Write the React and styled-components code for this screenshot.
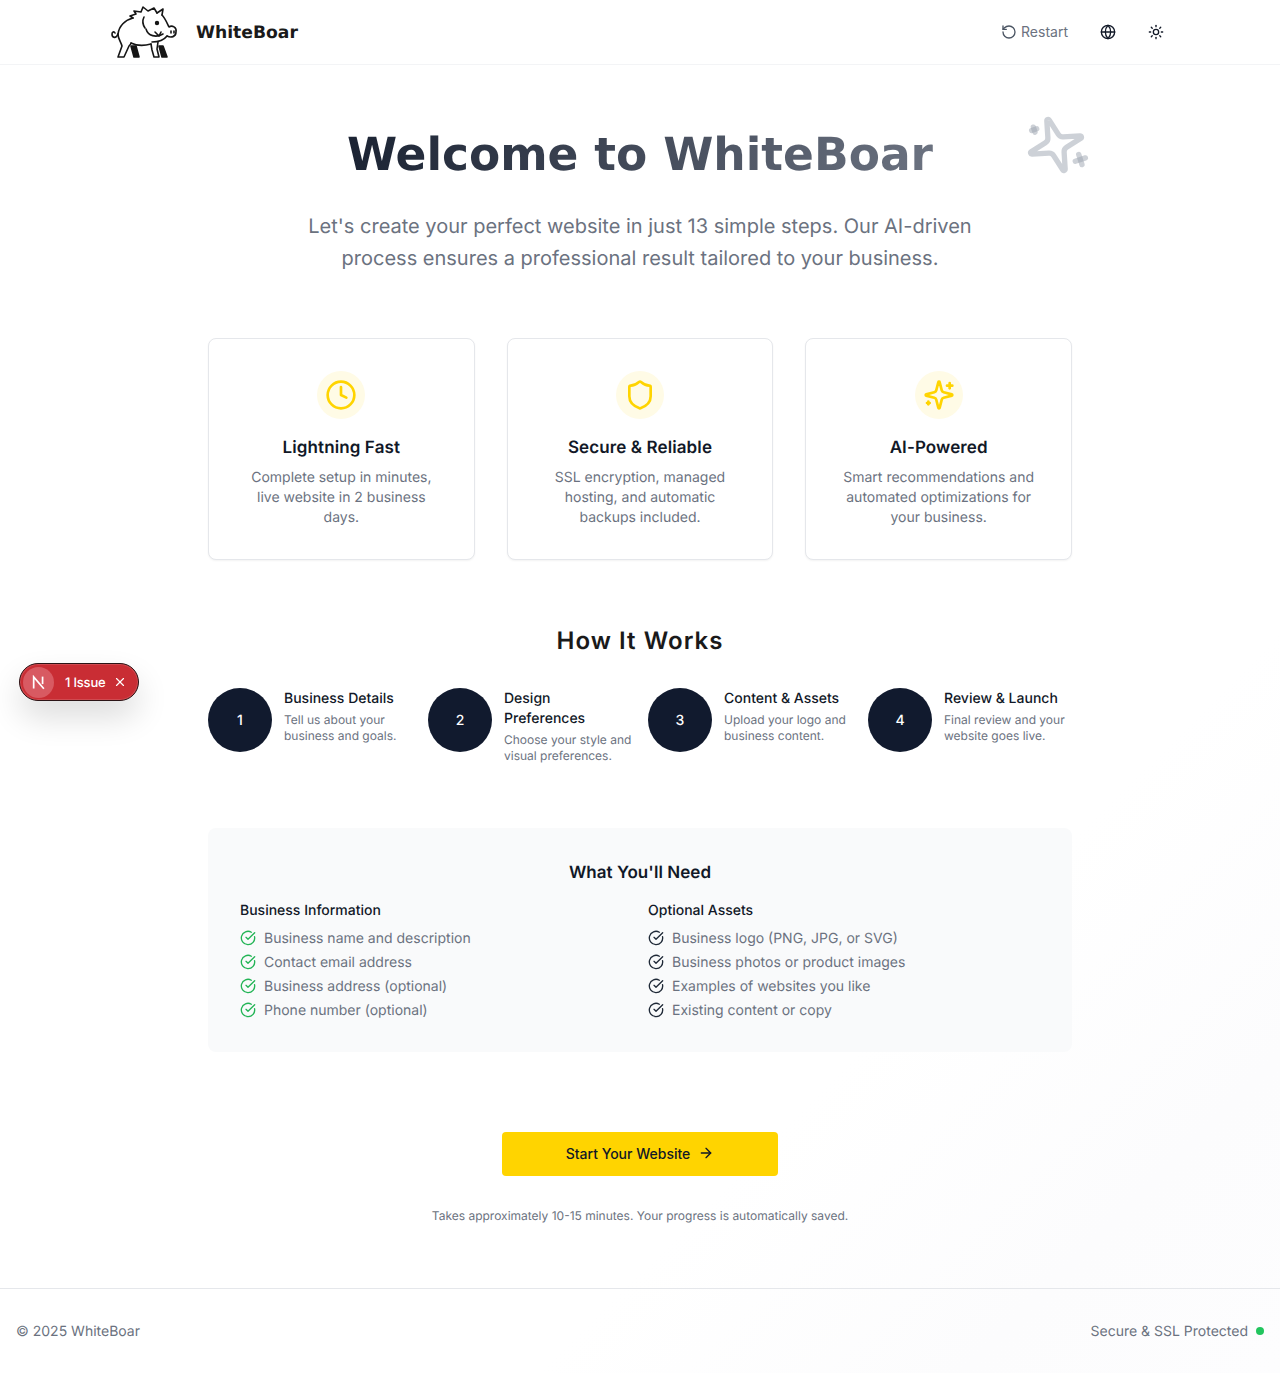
import React from "react";
import styled, { createGlobalStyle } from "styled-components";
import { ArrowRight, CircleCheckBig, Clock, Globe, RotateCcw, Shield, Sun, X } from "lucide-react";

const headingFont = `"Inter", "Liberation Sans", sans-serif`;
const displayFont = `"DejaVu Sans", "Liberation Sans", sans-serif`;

const GlobalStyle = createGlobalStyle`
  * { box-sizing: border-box; }
  html, body { margin: 0; padding: 0; }
  body {
    font-family: "Inter", "Liberation Sans", sans-serif;
    color: #111827;
    background: #fff;
    text-rendering: geometricPrecision;
  }
`;

const Page = styled.div`
  position: relative;
  min-height: 1373px;
  display: flex;
  flex-direction: column;
  background: linear-gradient(135deg, #ffffff 0%, #ffffff 72%, #fcfcfd 88%, #fdfdfe 100%);
`;

const Header = styled.header`
  height: 65px;
  border-bottom: 1px solid #f3f4f6;
  background: #fff;
`;

const HeaderInner = styled.div`
  width: 1056px;
  height: 64px;
  margin: 0 auto;
  display: flex;
  align-items: center;
  justify-content: space-between;
`;

const Brand = styled.div`
  display: flex;
  align-items: center;
  gap: 14px;
  margin-left: -4px;
`;

const BrandName = styled.span`
  padding-top: 2px;
  font-family: ${displayFont};
  font-size: 17.2px;
  font-weight: 700;
  color: #1a1a1a;
`;

const HeaderActions = styled.div`
  display: flex;
  align-items: center;
`;

const RestartButton = styled.button`
  display: flex;
  align-items: center;
  gap: 4px;
  padding: 0;
  margin-right: 32px;
  border: 0;
  background: none;
  font: inherit;
  font-size: 14px;
  color: #6b7280;
  svg { color: #4b5563; }
  span { margin-top: -2px; }
`;

const IconButton = styled.button`
  width: 16px;
  height: 16px;
  padding: 0;
  margin-right: ${(p) => p.$gap || 0}px;
  border: 0;
  background: none;
  color: #111827;
  display: flex;
`;

const Main = styled.main`
  position: relative;
  flex: 1;
  display: flex;
  flex-direction: column;
  align-items: center;
`;

const Decor = styled.div`
  position: absolute;
  left: 1024px;
  top: 48px;
  width: 64px;
  height: 64px;
  transform: rotate(72deg);
  display: flex;
`;

const Title = styled.h1`
  margin: 66px 0 0;
  font-family: ${displayFont};
  font-size: 45.5px;
  line-height: 48px;
  font-weight: 700;
  background: linear-gradient(90deg, #1b2333 0%, #6b7280 100%);
  -webkit-background-clip: text;
  background-clip: text;
  color: transparent;
`;

const Subtitle = styled.p`
  width: 720px;
  margin: 31px 0 0;
  font-size: 20px;
  line-height: 32px;
  text-align: center;
  color: #6b7280;
`;

const Cards = styled.section`
  width: 864px;
  margin-top: 64px;
  display: grid;
  grid-template-columns: repeat(3, 1fr);
  gap: 32px;
`;

const Card = styled.article`
  height: 222px;
  padding: 32px 32px 0;
  border: 1px solid #e5e7eb;
  border-radius: 8px;
  background: #fff;
  box-shadow: 0 1px 2px rgba(0, 0, 0, 0.05);
  text-align: center;
`;

const CardIcon = styled.div`
  width: 48px;
  height: 48px;
  margin: 0 auto;
  border-radius: 50%;
  background: #fffbe6;
  color: #ffd400;
  display: flex;
  align-items: center;
  justify-content: center;
`;

const CardTitle = styled.h3`
  margin: 17px 0 0;
  font-family: ${headingFont};
  font-size: 17px;
  line-height: 24px;
  font-weight: 600;
  letter-spacing: 0.1px;
  color: #111827;
`;

const CardText = styled.p`
  margin: 8px 0 0;
  font-size: 14px;
  line-height: 20px;
  color: #6b7280;
`;

const SectionTitle = styled.h2`
  margin: 65px 0 0;
  font-family: ${headingFont};
  font-size: 24px;
  line-height: 32px;
  font-weight: 600;
  letter-spacing: 1.05px;
  color: #1a1a1a;
`;

const Steps = styled.section`
  width: 864px;
  margin-top: 31px;
  display: grid;
  grid-template-columns: repeat(4, 1fr);
  gap: 16px;
`;

const Step = styled.div`
  display: flex;
  gap: 12px;
`;

const StepNumber = styled.div`
  flex: none;
  width: 64px;
  height: 64px;
  border-radius: 50%;
  background: #111a2e;
  color: #fff;
  font-size: 14px;
  font-weight: 500;
  display: flex;
  align-items: center;
  justify-content: center;
`;

const StepBody = styled.div`
  padding-top: 1px;
`;

const StepTitle = styled.div`
  font-size: 14px;
  line-height: 20px;
  font-weight: 500;
  color: #111827;
`;

const StepText = styled.div`
  margin-top: 3px;
  font-size: 12px;
  line-height: 16px;
  color: #6b7280;
`;

const Needs = styled.section`
  width: 864px;
  height: 224px;
  margin-top: 64px;
  padding: 33px 32px 0;
  border-radius: 8px;
  background: #f9fafb;
`;

const NeedsTitle = styled.h3`
  margin: 0;
  font-family: ${headingFont};
  font-size: 17px;
  line-height: 24px;
  font-weight: 600;
  letter-spacing: 0.05px;
  text-align: center;
  color: #111827;
`;

const NeedsGrid = styled.div`
  margin-top: 16px;
  display: grid;
  grid-template-columns: 1fr 1fr;
  gap: 16px;
`;

const NeedsHeading = styled.h4`
  margin: 0 0 8px;
  font-size: 14px;
  line-height: 20px;
  font-weight: 500;
  color: #111827;
`;

const NeedsList = styled.ul`
  margin: 0;
  padding: 0;
  list-style: none;
  display: flex;
  flex-direction: column;
  gap: 4px;
`;

const NeedsItem = styled.li`
  display: flex;
  align-items: center;
  gap: 8px;
  font-size: 14px;
  line-height: 20px;
  color: #6b7280;
  svg { flex: none; margin-top: -2px; color: ${(p) => p.$tone}; }
`;

const StartButton = styled.button`
  width: 276px;
  height: 44px;
  margin-top: 80px;
  padding: 0 0 2px;
  border: 0;
  border-radius: 4px;
  background: #ffd400;
  color: #111827;
  font: inherit;
  font-size: 14px;
  font-weight: 500;
  display: flex;
  align-items: center;
  justify-content: center;
  gap: 8px;
`;

const Note = styled.p`
  margin: 32px 0 0;
  font-size: 12px;
  line-height: 16px;
  color: #6b7280;
`;

const Footer = styled.footer`
  height: 85px;
  padding: 0 16px;
  border-top: 1px solid #e5e7eb;
  display: flex;
  align-items: center;
  justify-content: space-between;
  font-size: 14px;
  color: #6b7280;
`;

const SecureNote = styled.div`
  display: flex;
  align-items: center;
  gap: 8px;
`;

const StatusDot = styled.span`
  width: 8px;
  height: 8px;
  border-radius: 50%;
  background: #22c55e;
`;

const IssueBadge = styled.div`
  position: absolute;
  left: 19px;
  top: 663px;
  width: 120px;
  height: 38px;
  padding: 3px 11px 3px 3px;
  border: 1px solid #2b1416;
  border-radius: 19px;
  background: #c92d34;
  box-shadow: inset 0 0 0 1px rgba(255, 255, 255, 0.14), 0 16px 32px rgba(0, 0, 0, 0.14);
  color: #fff;
  font-size: 13px;
  font-weight: 500;
  letter-spacing: -0.2px;
  display: flex;
  align-items: center;
`;

const IssueLogo = styled.span`
  width: 31px;
  height: 31px;
  margin-right: 11px;
  border-radius: 50%;
  background: #d85a62;
  display: flex;
  align-items: center;
  justify-content: center;
`;

const IssueLabel = styled.span`
  padding-top: 1px;
`;

const IssueClose = styled.span`
  margin-left: auto;
  display: flex;
`;

const steps = [
  ["1", "Business Details", "Tell us about your business and goals."],
  ["2", "Design Preferences", "Choose your style and visual preferences."],
  ["3", "Content & Assets", "Upload your logo and business content."],
  ["4", "Review & Launch", "Final review and your website goes live."],
];

const STAR =
  "M9.937 15.5A2 2 0 0 0 8.5 14.063l-6.135-1.582a.5.5 0 0 1 0-.962L8.5 9.936A2 2 0 0 0 9.937 8.5l1.582-6.135a.5.5 0 0 1 .963 0L14.063 8.5A2 2 0 0 0 15.5 9.937l6.135 1.581a.5.5 0 0 1 0 .964L15.5 14.063a2 2 0 0 0-1.437 1.437l-1.582 6.135a.5.5 0 0 1-.963 0z";

// the older lucide sparkles, each stroke separate so overlaps darken when translucent
function SparkleIcon({ size = 24, color = "currentColor", fade = 1 }) {
  return (
    <svg width={size} height={size} viewBox="0 0 24 24" fill="none" stroke={color} strokeOpacity={fade} strokeWidth="2" strokeLinecap="round" strokeLinejoin="round">
      <path d={STAR} />
      <path d="M20 3v4" />
      <path d="M22 5h-4" />
      <path d="M4 17v2" />
      <path d="M5 18H3" />
    </svg>
  );
}

const features = [
  [Clock, "Lightning Fast", "Complete setup in minutes, live website in 2 business days."],
  [Shield, "Secure & Reliable", "SSL encryption, managed hosting, and automatic backups included."],
  [SparkleIcon, "AI-Powered", "Smart recommendations and automated optimizations for your business."],
];

const businessInfo = [
  "Business name and description",
  "Contact email address",
  "Business address (optional)",
  "Phone number (optional)",
];

const optionalAssets = [
  "Business logo (PNG, JPG, or SVG)",
  "Business photos or product images",
  "Examples of websites you like",
  "Existing content or copy",
];

function BoarLogo() {
  return (
    <svg width="74" height="58" viewBox="0 1 74 58" fill="none" stroke="#161616" strokeWidth="1.6" strokeLinecap="round" strokeLinejoin="round">
      {/* tail */}
      <path d="M10 32C8 37 4 36 4 32c0-2 2-3 3-1" />
      {/* back */}
      <path d="M10 32c1-8 7-14 15-16" />
      {/* mane */}
      <path d="M25 16l-3-2 6-2-2-3 7 1 2-5 5 4 6-3 3 5" />
      {/* ear */}
      <path d="M49 11l6-4-1 6" />
      <path d="M36 15c-2 4-1 8 1 11" />
      {/* brow and snout */}
      <path d="M54 13c3 3 5 8 7 12 3-2 8 0 7 5 0 5-5 6-9 4" />
      {/* jaw and neck */}
      <path d="M59 34c-3 4-9 6-15 6" />
      {/* eye */}
      <circle cx="49" cy="21" r="1.4" fill="#161616" />
      {/* mouth and tusk */}
      <path d="M38 27c2 7 10 9 17 5" />
      <path d="M47 30l4 4 2-4" />
      <path d="M63 29v2M66 29v2" />
      {/* hind legs */}
      <path d="M10 32c0 5 3 8 4 12l-4 11h6l5-11c1-1 2-2 2-3" />
      <path d="M23 44l3 11h5l-3-11z" fill="#161616" />
      {/* belly */}
      <path d="M23 41c6 3 13 3 20 1" />
      {/* front legs */}
      <path d="M43 42l1 6 2 7h5l-2-8 1-7" />
      <path d="M51 44l3 11h5l-4-11z" fill="#161616" />
    </svg>
  );
}

function NextMark() {
  return (
    <svg width="15" height="15" viewBox="0 0 14 14" fill="none" stroke="#fff" strokeWidth="1.6">
      <path d="M2.5 12.5V1.8L12 12.8" />
      <path d="M10.8 1.5v7" />
    </svg>
  );
}

function CheckList({ title, items, tone }) {
  return (
    <div>
      <NeedsHeading>{title}</NeedsHeading>
      <NeedsList>
        {items.map((item) => (
          <NeedsItem key={item} $tone={tone}>
            <CircleCheckBig size={16} />
            {item}
          </NeedsItem>
        ))}
      </NeedsList>
    </div>
  );
}

export default function App() {
  return (
    <Page>
      <GlobalStyle />
      <Header>
        <HeaderInner>
          <Brand>
            <BoarLogo />
            <BrandName>WhiteBoar</BrandName>
          </Brand>
          <HeaderActions>
            <RestartButton>
              <RotateCcw size={16} />
              <span>Restart</span>
            </RestartButton>
            <IconButton $gap={32}><Globe size={16} /></IconButton>
            <IconButton $gap={4}><Sun size={16} /></IconButton>
          </HeaderActions>
        </HeaderInner>
      </Header>

      <Main>
        <Decor><SparkleIcon size={64} color="#9ca3af" fade={0.5} /></Decor>
        <Title>Welcome to WhiteBoar</Title>
        <Subtitle>
          Let's create your perfect website in just 13 simple steps. Our AI-driven process ensures a professional result tailored to your business.
        </Subtitle>

        <Cards>
          {features.map(([Icon, title, text]) => (
            <Card key={title}>
              <CardIcon><Icon size={32} /></CardIcon>
              <CardTitle>{title}</CardTitle>
              <CardText>{text}</CardText>
            </Card>
          ))}
        </Cards>

        <SectionTitle>How It Works</SectionTitle>
        <Steps>
          {steps.map(([num, title, text]) => (
            <Step key={num}>
              <StepNumber>{num}</StepNumber>
              <StepBody>
                <StepTitle>{title}</StepTitle>
                <StepText>{text}</StepText>
              </StepBody>
            </Step>
          ))}
        </Steps>

        <Needs>
          <NeedsTitle>What You'll Need</NeedsTitle>
          <NeedsGrid>
            <CheckList title="Business Information" items={businessInfo} tone="#22b455" />
            <CheckList title="Optional Assets" items={optionalAssets} tone="#1f2937" />
          </NeedsGrid>
        </Needs>

        <StartButton>
          Start Your Website
          <ArrowRight size={16} />
        </StartButton>
        <Note>Takes approximately 10-15 minutes. Your progress is automatically saved.</Note>
      </Main>

      <Footer>
        <span>© 2025 WhiteBoar</span>
        <SecureNote>
          Secure & SSL Protected
          <StatusDot />
        </SecureNote>
      </Footer>

      <IssueBadge>
        <IssueLogo><NextMark /></IssueLogo>
        <IssueLabel>1 Issue</IssueLabel>
        <IssueClose><X size={14} /></IssueClose>
      </IssueBadge>
    </Page>
  );
}
